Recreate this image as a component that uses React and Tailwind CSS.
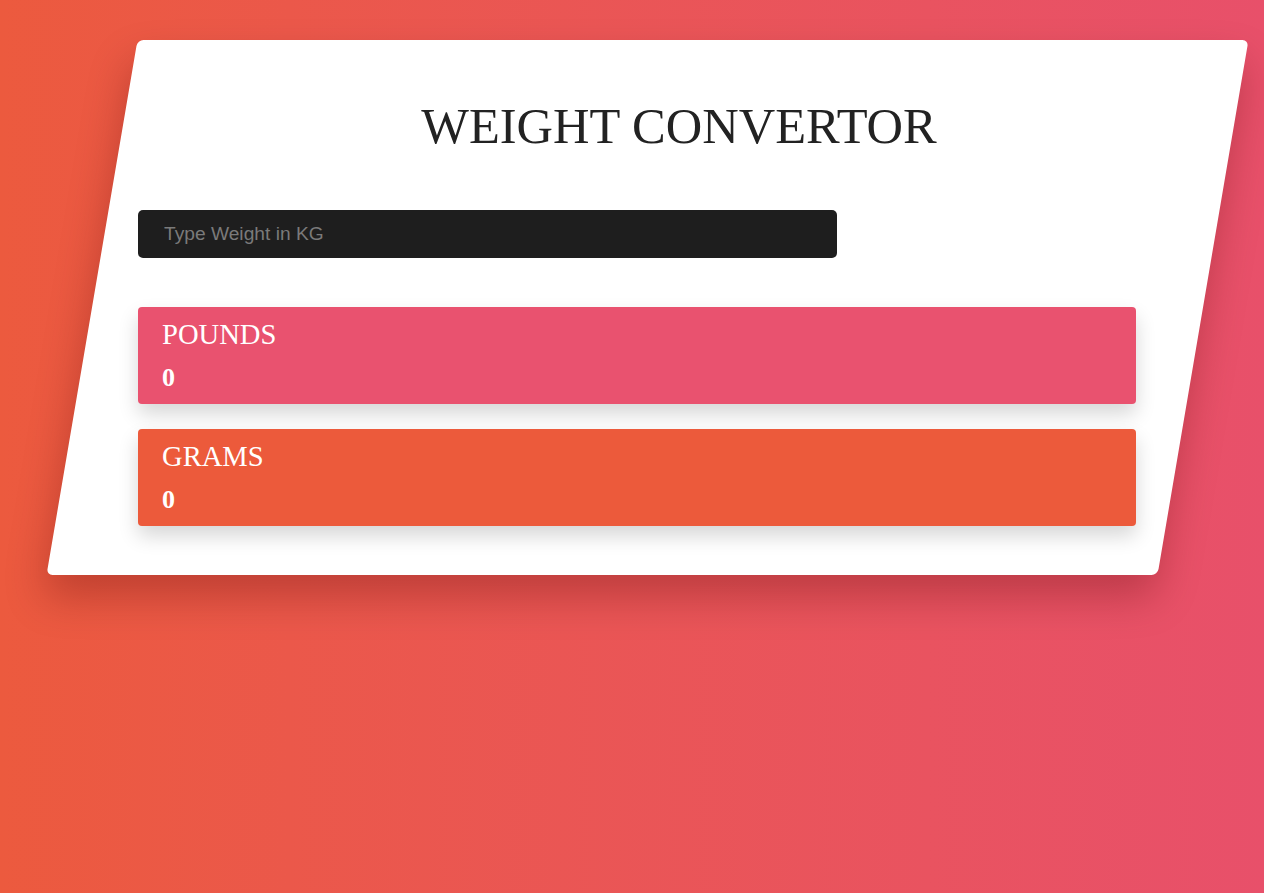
import { useState } from 'react'

function ResultBox({ label, value, color }) {
  return (
    <div
      className={`w-[998px] h-[97px] rounded-[4px] pl-6 pt-[14px] text-white shadow-[0_10px_20px_rgba(0,0,0,0.16)] ${color}`}
    >
      <div className="text-[28.6px] leading-[28px]">{label}</div>
      <div className="mt-4 text-[26px] leading-[26px] font-bold">{value}</div>
    </div>
  )
}

export default function App() {
  const [kg, setKg] = useState('')
  const n = parseFloat(kg)
  const pounds = isNaN(n) ? 0 : +(n * 2.20462).toFixed(2)
  const grams = isNaN(n) ? 0 : n * 1000

  return (
    <div className="min-h-[893px] bg-gradient-to-r from-[#ec5a3e] to-[#e8506a] pt-10 font-['Liberation_Serif',serif]">
      <div className="relative ml-[92px] w-[1111px] h-[535px]">
        <div className="absolute inset-0 skew-x-[-9.65deg] rounded-[6px] bg-white shadow-[0_22px_40px_rgba(80,0,0,0.28)]" />
        <div className="relative pl-[46px]">
          <h1 className="pt-[61px] pl-[17px] text-center text-[50.5px] leading-[50px] text-[#222]">
            WEIGHT CONVERTOR
          </h1>
          <input
            value={kg}
            onChange={(e) => setKg(e.target.value)}
            placeholder="Type Weight in KG"
            className="mt-[59px] block w-[699px] h-12 rounded-[5px] bg-[#1e1e1e] px-[26px] text-[19.2px] text-white placeholder:text-[#7a7a7a] font-['Liberation_Sans',Arial,sans-serif] outline-none"
          />
          <div className="mt-[49px] flex flex-col gap-[25px]">
            <ResultBox label="POUNDS" value={pounds} color="bg-[#e9526f]" />
            <ResultBox label="GRAMS" value={grams} color="bg-[#ec5a3b]" />
          </div>
        </div>
      </div>
    </div>
  )
}
